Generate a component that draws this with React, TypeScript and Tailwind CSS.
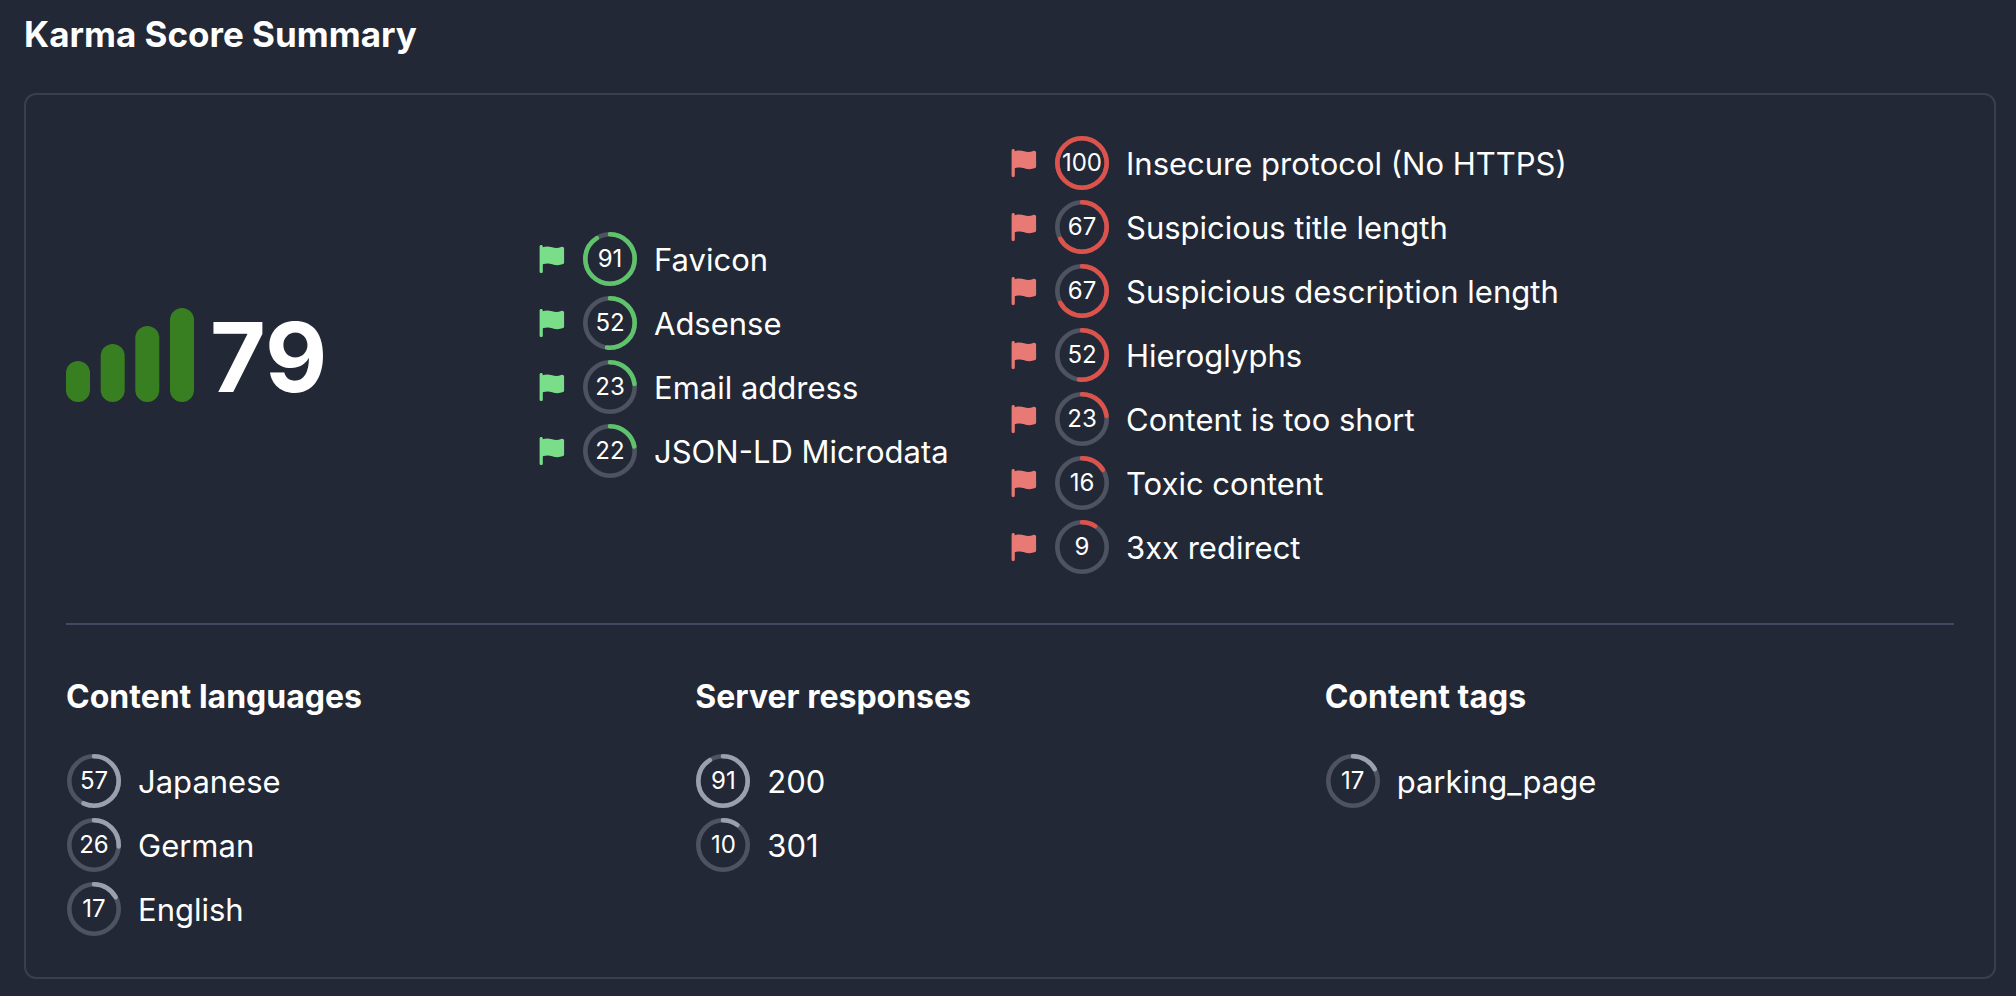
import React from 'react';

type Tone = 'good' | 'bad' | 'neutral';

interface Score {
    value: number;
    label: string;
}

const goodScores: Score[] = [
    { value: 91, label: 'Favicon' },
    { value: 52, label: 'Adsense' },
    { value: 23, label: 'Email address' },
    { value: 22, label: 'JSON-LD Microdata' },
];

const badScores: Score[] = [
    { value: 100, label: 'Insecure protocol (No HTTPS)' },
    { value: 67, label: 'Suspicious title length' },
    { value: 67, label: 'Suspicious description length' },
    { value: 52, label: 'Hieroglyphs' },
    { value: 23, label: 'Content is too short' },
    { value: 16, label: 'Toxic content' },
    { value: 9, label: '3xx redirect' },
];

const groups: { title: string; items: Score[] }[] = [
    {
        title: 'Content languages',
        items: [
            { value: 57, label: 'Japanese' },
            { value: 26, label: 'German' },
            { value: 17, label: 'English' },
        ],
    },
    {
        title: 'Server responses',
        items: [
            { value: 91, label: '200' },
            { value: 10, label: '301' },
        ],
    },
    { title: 'Content tags', items: [{ value: 17, label: 'parking_page' }] },
];

const ringColors: Record<Tone, string> = {
    good: 'stroke-[#5fc36b]',
    bad: 'stroke-[#de524c]',
    neutral: 'stroke-[#9aa0ad]',
};

const Flag: React.FC<{ tone: Tone }> = ({ tone }) => (
    <svg
        viewBox="0 0 28 28"
        aria-hidden="true"
        className={`h-7 w-7 shrink-0 ${tone === 'good' ? 'fill-[#79dd8a]' : 'fill-[#e87974]'}`}
    >
        <path d="M1.6 1.6C1.6.7 2.3 0 3.2 0s1.6.7 1.6 1.6v.6c2.8-1 5.9-1.1 9.3.1 3.2 1.1 6.2 1 9-.3 1.4-.6 3 .2 3 1.5v14.3c0 .6-.4 1.1-1 1.3-3.6 1.5-7.1 1.5-11 .1-3-1-6.2-.9-9.3.1v7.1c0 .9-.7 1.6-1.6 1.6s-1.6-.7-1.6-1.6z" />
    </svg>
);

const Ring: React.FC<{ value: number; tone: Tone }> = ({ value, tone }) => (
    <div className="grid h-14 w-14 shrink-0 place-items-center">
        <svg viewBox="0 0 56 56" fill="none" aria-hidden="true" className="col-start-1 row-start-1 h-14 w-14 -rotate-90">
            <circle cx="28" cy="28" r="24.7" strokeWidth="4.6" className="stroke-[#4d5361]" />
            <circle
                cx="28"
                cy="28"
                r="24.7"
                strokeWidth="4.6"
                strokeLinecap="round"
                pathLength={100}
                strokeDasharray={`${value} 100`}
                className={ringColors[tone]}
            />
        </svg>
        <span className="col-start-1 row-start-1 text-2xl">{value}</span>
    </div>
);

const ScoreList: React.FC<{ items: Score[]; tone: Tone }> = ({ items, tone }) => (
    <ul className="flex flex-col gap-2">
        {items.map(item => (
            <li key={item.label} className="flex items-center gap-4">
                {tone !== 'neutral' && <Flag tone={tone} />}
                <Ring value={item.value} tone={tone} />
                <span className="pt-0.5 text-[31px] leading-10 whitespace-nowrap">{item.label}</span>
            </li>
        ))}
    </ul>
);

const SignalBars: React.FC = () => (
    <svg viewBox="0 0 128 94" aria-hidden="true" className="h-[94px] w-32 fill-[#387f22]">
        <rect x="0" y="53" width="24" height="41" rx="12" />
        <rect x="34.7" y="36" width="24" height="58" rx="12" />
        <rect x="69.3" y="18" width="24" height="76" rx="12" />
        <rect x="104" y="0" width="24" height="94" rx="12" />
    </svg>
);

export default function App() {
    return (
        <main className="min-h-screen bg-[#222835] py-4 pr-5 pl-6 font-['Inter','Liberation_Sans',sans-serif] text-white">
            <h1 className="text-[35px] leading-9 font-bold">Karma Score Summary</h1>

            <section className="mt-[41px] rounded-xl border-2 border-[#393f4c] p-10">
                <div className="grid grid-cols-4 items-center">
                    <div className="flex items-center gap-4">
                        <SignalBars />
                        <span className="pt-1 text-8xl font-bold">79</span>
                    </div>
                    <ScoreList items={goodScores} tone="good" />
                    <div className="col-span-2">
                        <ScoreList items={badScores} tone="bad" />
                    </div>
                </div>

                <hr className="my-12 border-t-2 border-[#434960]" />

                <div className="grid grid-cols-3">
                    {groups.map(group => (
                        <div key={group.title}>
                            <h2 className="mb-8 text-[32px] leading-12 font-bold">{group.title}</h2>
                            <ScoreList items={group.items} tone="neutral" />
                        </div>
                    ))}
                </div>
            </section>
        </main>
    );
}
